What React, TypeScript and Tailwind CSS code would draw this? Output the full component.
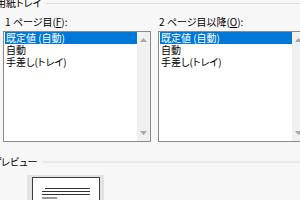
import React from "react";

const items = ["既定値 (自動)", "自動", "手差し(トレイ)"];

function UpArrow() {
  return (
    <svg width="7" height="4" viewBox="0 0 7 4" className="block">
      <path d="M3.5 0 L7 4 L0 4 Z" fill="#a6a6a6" />
    </svg>
  );
}
function DownArrow() {
  return (
    <svg width="7" height="4" viewBox="0 0 7 4" className="block">
      <path d="M0 0 L7 0 L3.5 4 Z" fill="#a6a6a6" />
    </svg>
  );
}

function ListBox() {
  return (
    <div className="flex h-[111px] border border-[#8a8a8a] bg-white">
      <div className="flex-1 pl-px">
        {items.map((t, i) => (
          <div
            key={t}
            className={
              i === 0
                ? "h-[12px] leading-[12px] pl-px bg-[#0078d7] text-white"
                : "h-[12px] leading-[12px] pl-px text-black"
            }
          >
            {t}
          </div>
        ))}
      </div>
      <div className="w-[13px] bg-[#f0f0f0] flex flex-col items-center justify-between pt-[6px] pb-[6px]">
        <UpArrow />
        <DownArrow />
      </div>
    </div>
  );
}

export default function App() {
  return (
    <div
      className="w-[300px] h-[200px] overflow-hidden bg-[#f7f7f7] text-[10px] leading-[12px] text-black [font-feature-settings:'palt']"
      style={{ fontFamily: '"Noto Sans CJK JP", "Noto Sans", sans-serif' }}
    >
      <div className="flex items-center h-[12px] -mt-[3px]">
        <span className="-ml-[4px] whitespace-nowrap">用紙トレイ</span>
        <div className="flex-1 h-px bg-[#dcdcdc] ml-[5px]" />
      </div>
      <div className="flex gap-[7px] ml-[3px] mt-[7px]">
        <div className="w-[148px] shrink-0">
          <div className="h-[12px] pl-[2px] whitespace-nowrap">1 ページ目(<span className="underline">F</span>):</div>
          <div className="mt-[3px]">
            <ListBox />
          </div>
        </div>
        <div className="w-[148px] shrink-0">
          <div className="h-[12px] pl-px whitespace-nowrap">2 ページ目以降(<span className="underline">O</span>):</div>
          <div className="mt-[3px]">
            <ListBox />
          </div>
        </div>
      </div>
      <div className="flex items-center h-[12px] mt-[14px]">
        <span className="-ml-[8px] whitespace-nowrap">プレビュー</span>
        <div className="flex-1 h-[2px] bg-[#e8e8e8] ml-[5px]" />
      </div>
      <div className="ml-[27px] mt-[7px] w-[77px] h-[40px] bg-[#e3e3e3] pl-[5px] pr-[4px] pt-[2px]">
        <div className="h-full border border-[#404040] bg-white pt-[10px]">
          <div className="ml-[12px] w-[45px] h-px bg-[#333]" />
          <div className="ml-[9px] mt-[2px] w-[48px] h-px bg-[#333]" />
          <div className="ml-[9px] mt-[2px] w-[48px] h-px bg-[#333]" />
          <div className="ml-[9px] mt-[2px] w-[15px] h-[2px] bg-[#9a9a9a]" />
        </div>
      </div>
    </div>
  );
}
